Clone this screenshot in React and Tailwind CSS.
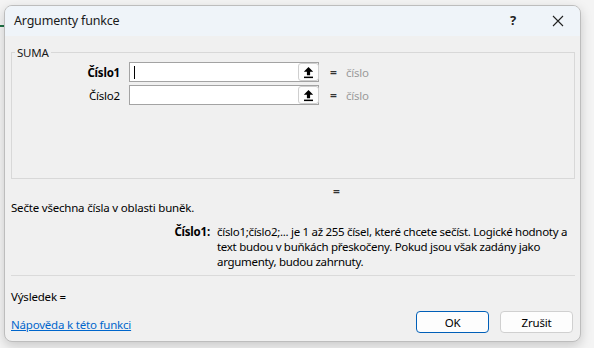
import React from "react";

function UpArrow() {
  return (
    <svg width="11" height="13" viewBox="0 0 11 13">
      <path d="M5.5 1 L10.2 5.8 L7.1 5.8 L7.1 9.2 L3.9 9.2 L3.9 5.8 L0.8 5.8 Z" fill="#000" />
      <rect x="1" y="10.6" width="9" height="1.5" fill="#000" />
    </svg>
  );
}

function ArgRow({ label, bold, cursor }) {
  return (
    <div className="flex items-center h-[20px]">
      <div className={`w-[108px] text-right text-[11.5px] leading-[15px] tracking-[-0.2px] ${bold ? "font-bold" : ""} text-[#000]`}>{label}</div>
      <div className="ml-[9px] w-[190px] h-[20px] border border-[#a3a3a3] bg-white flex items-center">
        <div className="flex-1 h-full flex items-center pl-[4px]">
          {cursor && <div className="w-[1px] h-[13px] bg-black" />}
        </div>
        <div className="w-[21px] h-[18px] border border-[#cfcfcf] rounded-[3px] bg-[#fdfdfd] flex items-center justify-center mr-[-1px]">
          <UpArrow />
        </div>
      </div>
      <div className="ml-[11px] text-[12px] leading-[15px] font-bold text-[#333]">=</div>
      <div className="ml-[9px] text-[11.5px] leading-[15px] tracking-[-0.2px] text-[#9a9a9a]">číslo</div>
    </div>
  );
}

export default function App() {
  const t = "text-[11.5px] leading-[15px] tracking-[-0.2px]";
  return (
    <div
      className="w-[594px] h-[348px] bg-[#f4f4f4] relative overflow-hidden"
      style={{ fontFamily: '"Noto Sans", "Open Sans", sans-serif' }}
    >
      <div className="absolute left-0 top-[25px] w-[6px] h-[2px] bg-[#1e7145]" />
      <div className="absolute left-[4px] top-[5px] w-[577px] h-[337px] rounded-[8px] border border-[#bdbdbd] bg-[#f0f0f0] shadow-[0_4px_12px_rgba(0,0,0,0.18)] overflow-hidden flex flex-col text-[#000]">
        {/* title bar */}
        <div className="h-[30px] bg-[#eff4f9] flex items-center shrink-0">
          <div className="pl-[9px] text-[12.5px] leading-[16px] tracking-[-0.2px] text-[#1a1a1a] flex-1">Argumenty funkce</div>
          <div className="w-[30px] text-center text-[13px] font-bold text-[#222] mr-[15px]">?</div>
          <div className="w-[30px] flex justify-center mr-[7px]">
            <svg width="12" height="12" viewBox="0 0 12 12">
              <path d="M1 1 L11 11 M11 1 L1 11" stroke="#222" strokeWidth="1.1" />
            </svg>
          </div>
        </div>
        {/* body */}
        <div className="flex-1 px-[6px] flex flex-col">
          <fieldset className="mt-[9px] h-[134px] w-[564px] border border-[#d8d8d8] relative shrink-0">
            <legend className={`ml-[3px] px-[2px] ${t} text-[#1a1a1a]`}>SUMA</legend>
            <div className="pt-[2px] flex flex-col gap-[3px]">
              <ArgRow label="Číslo1" bold cursor />
              <ArgRow label="Číslo2" />
            </div>
          </fieldset>
          <div className="h-[20px] flex items-center pt-[5px] pl-[322px] text-[12px] leading-[15px] font-bold text-[#333]">=</div>
          <div className={`mt-[1px] ${t}`}>Sečte všechna čísla v oblasti buněk.</div>
          <div className={`mt-[9px] flex ${t}`}>
            <div className={`w-[206px] shrink-0 text-right font-bold pr-[7px] ${t}`}>Číslo1:</div>
            <div className="w-[360px] shrink-0 text-[11.5px] leading-[15px] tracking-[-0.3px]">
              číslo1;číslo2;... je 1 až 255 čísel, které chcete sečíst. Logické hodnoty a text budou v buňkách přeskočeny. Pokud jsou však zadány jako argumenty, budou zahrnuty.
            </div>
          </div>
          <div className="mt-[6px] h-[1px] w-[564px] bg-[#dadada] shrink-0" />
          <div className={`mt-[13px] ${t}`}>Výsledek =</div>
          <div className="mt-[7px] flex items-end">
            <a className={`${t} text-[#0066cc] underline pb-[1px]`}>Nápověda k této funkci</a>
            <div className="ml-auto flex gap-[11px] mr-[1px]">
              <button className={`w-[73px] h-[22px] rounded-[4px] border border-[#005fb8] bg-[#fdfdfd] ${t}`}>OK</button>
              <button className={`w-[73px] h-[22px] rounded-[4px] border border-[#d0d0d0] bg-[#fdfdfd] ${t}`}>Zrušit</button>
            </div>
          </div>
        </div>
      </div>
    </div>
  );
}
